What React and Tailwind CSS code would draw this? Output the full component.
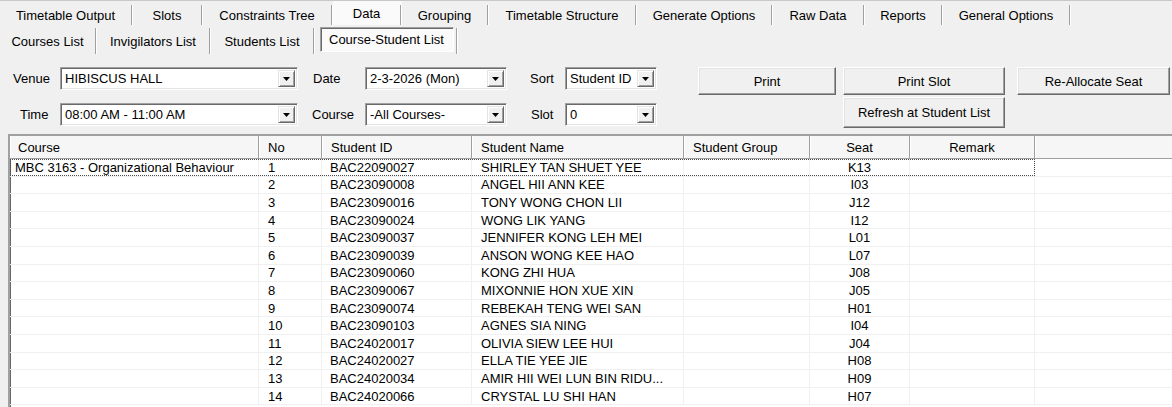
import React from "react";

const mainTabs = [
    { label: "Timetable Output", w: "w-[133px]" },
    { label: "Slots", w: "w-[70px]" },
    { label: "Constraints Tree", w: "w-[130px]" },
    { label: "Data", w: "w-[69px]", active: true },
    { label: "Grouping", w: "w-[87px]" },
    { label: "Timetable Structure", w: "w-[148px]" },
    { label: "Generate Options", w: "w-[136px]" },
    { label: "Raw Data", w: "w-[92px]" },
    { label: "Reports", w: "w-[78px]" },
    { label: "General Options", w: "w-[128px]" },
];

const subTabs = [
    { label: "Courses List", w: "w-[97px]" },
    { label: "Invigilators List", w: "w-[114px]" },
    { label: "Students List", w: "w-[104px]" },
];

const columns = [
    { label: "Course", w: "w-[249px]", head: "pl-[8px]", cell: "pl-[5px]" },
    { label: "No", w: "w-[63px]", head: "pl-[9px]", cell: "pl-[9px]" },
    { label: "Student ID", w: "w-[150px]", head: "pl-[9px]", cell: "pl-[8px]" },
    { label: "Student Name", w: "w-[212px]", head: "pl-[9px]", cell: "pl-[9px]" },
    { label: "Student Group", w: "w-[126px]", head: "pl-[9px]", cell: "pl-[9px]" },
    { label: "Seat", w: "w-[100px]", head: "justify-center", cell: "justify-center" },
    { label: "Remark", w: "w-[125px]", head: "justify-center", cell: "justify-center" },
];

const students = [
    ["BAC22090027", "SHIRLEY TAN SHUET YEE", "K13"],
    ["BAC23090008", "ANGEL HII ANN KEE", "I03"],
    ["BAC23090016", "TONY WONG CHON LII", "J12"],
    ["BAC23090024", "WONG LIK YANG", "I12"],
    ["BAC23090037", "JENNIFER KONG LEH MEI", "L01"],
    ["BAC23090039", "ANSON WONG KEE HAO", "L07"],
    ["BAC23090060", "KONG ZHI HUA", "J08"],
    ["BAC23090067", "MIXONNIE HON XUE XIN", "J05"],
    ["BAC23090074", "REBEKAH TENG WEI SAN", "H01"],
    ["BAC23090103", "AGNES SIA NING", "I04"],
    ["BAC24020017", "OLIVIA SIEW LEE HUI", "J04"],
    ["BAC24020027", "ELLA TIE YEE JIE", "H08"],
    ["BAC24020034", "AMIR HII WEI LUN BIN RIDU...", "H09"],
    ["BAC24020066", "CRYSTAL LU SHI HAN", "H07"],
];

function Separator({ tall }) {
    return (
        <div className={`w-[2px] shrink-0 self-end border-l border-l-[#a0a0a0] border-r border-r-white ${tall ? "h-[26px]" : "h-[20px]"}`} />
    );
}

function Combo({ w, value }) {
    return (
        <div className={`${w} h-[23px] flex items-stretch bg-white border border-t-[#a0a0a0] border-l-[#a0a0a0] border-b-white border-r-white shadow-[inset_1px_1px_0_#696969,inset_-1px_-1px_0_#e3e3e3] p-[2px]`}>
            <div className="flex-1 flex items-center pl-[2px] overflow-hidden whitespace-nowrap">{value}</div>
            <div className="w-[17px] shrink-0 flex items-center justify-center bg-[#f0f0f0] border border-t-[#e3e3e3] border-l-[#e3e3e3] border-b-[#696969] border-r-[#696969] shadow-[inset_1px_1px_0_#fff,inset_-1px_-1px_0_#a0a0a0]">
                <svg width="7" height="4" viewBox="0 0 7 4">
                    <path d="M0 0h7L3.5 4z" fill="#000" />
                </svg>
            </div>
        </div>
    );
}

function Btn({ w, h, children }) {
    return (
        <div className={`${w} ${h} flex items-center justify-center bg-[#f0f0f0] border border-t-white border-l-white border-b-[#696969] border-r-[#696969] shadow-[inset_-1px_-1px_0_#a0a0a0,inset_1px_1px_0_#e3e3e3]`}>
            {children}
        </div>
    );
}

export default function App() {
    return (
        <div className="w-[1172px] h-[407px] overflow-hidden bg-[#f0f0f0] text-[13px] text-black font-['Liberation_Sans',Arial,sans-serif] leading-none flex flex-col">
            {/* main tabs */}
            <div className="h-[25px] flex border-t border-t-[#c8c8c8]">
                {mainTabs.map((t) => (
                    <div key={t.label} className={`${t.w} flex shrink-0 ${t.active ? "bg-[#fafafa]" : ""}`}>
                        <div className={`flex-1 flex justify-center ${t.active ? "items-start pt-[6px]" : "items-center pt-[4px]"}`}>{t.label}</div>
                        <Separator />
                    </div>
                ))}
            </div>

            {/* sub tabs */}
            <div className="h-[29px] flex items-start">
                {subTabs.map((t) => (
                    <div key={t.label} className={`${t.w} h-[29px] flex shrink-0`}>
                        <div className="flex-1 flex items-center justify-center pt-[3px]">{t.label}</div>
                        <Separator tall />
                    </div>
                ))}
                <div className="ml-[5px] mt-[2px] w-[134px] h-[25px] flex items-center pl-[8px] bg-[#fafafa] border border-t-[#a0a0a0] border-l-[#a0a0a0] border-b-white border-r-white shadow-[inset_1px_1px_0_#696969]">
                    Course-Student List
                </div>
                <div className="w-[2px] h-[26px] mt-[3px] ml-[2px] border-l border-l-[#a0a0a0] border-r border-r-white" />
            </div>

            {/* controls */}
            <div className="h-[67px] mt-[13px] flex shrink-0">
                <div className="w-[698px] flex flex-col gap-[13px]">
                    <div className="flex items-center h-[23px]">
                        <div className="w-[60px] pl-[13px]">Venue</div>
                        <Combo w="w-[238px]" value="HIBISCUS HALL" />
                        <div className="w-[67px] pl-[15px]">Date</div>
                        <Combo w="w-[142px]" value="2-3-2026 (Mon)" />
                        <div className="w-[58px] pl-[23px]">Sort</div>
                        <Combo w="w-[92px]" value="Student ID" />
                    </div>
                    <div className="flex items-center h-[23px]">
                        <div className="w-[60px] pl-[20px]">Time</div>
                        <Combo w="w-[238px]" value="08:00 AM - 11:00 AM" />
                        <div className="w-[67px] pl-[14px]">Course</div>
                        <Combo w="w-[142px]" value="-All Courses-" />
                        <div className="w-[58px] pl-[24px]">Slot</div>
                        <Combo w="w-[92px]" value="0" />
                    </div>
                </div>
                <div className="flex flex-col gap-[2px]">
                    <div className="flex">
                        <Btn w="w-[138px]" h="h-[28px]">Print</Btn>
                        <div className="ml-[7px]">
                            <Btn w="w-[162px]" h="h-[28px]">Print Slot</Btn>
                        </div>
                        <div className="ml-[12px]">
                            <Btn w="w-[153px]" h="h-[28px]">Re-Allocate Seat</Btn>
                        </div>
                    </div>
                    <div className="ml-[145px]">
                        <Btn w="w-[162px]" h="h-[31px]">Refresh at Student List</Btn>
                    </div>
                </div>
            </div>

            {/* list view */}
            <div className="ml-[8px] flex-1 bg-white border-2 border-t-[#a0a0a0] border-l-[#a0a0a0] border-r-0 border-b-0 shadow-[inset_1px_1px_0_#696969] overflow-hidden">
                <div className="h-[23px] flex bg-[#f6f6f6] border-b border-b-[#a0a0a0]">
                    {columns.map((c) => (
                        <div key={c.label} className={`${c.w} shrink-0 flex items-center ${c.head} border-r border-r-[#a0a0a0] shadow-[inset_1px_0_0_#fff]`}>
                            {c.label}
                        </div>
                    ))}
                    <div className="flex-1 shadow-[inset_1px_0_0_#fff]" />
                </div>
                {students.map((s, i) => {
                    const values = [i === 0 ? "MBC 3163 - Organizational Behaviour" : "", String(i + 1), s[0], s[1], "", s[2], ""];
                    return (
                        <div key={s[0]} className="h-[17.6px] flex border-b border-b-[#f0f0f0]">
                            <div className={`flex ${i === 0 ? "outline outline-1 outline-dotted outline-[#4a4a4a] -outline-offset-1" : ""}`}>
                                {values.map((v, j) => (
                                    <div key={j} className={`${columns[j].w} shrink-0 flex items-center ${columns[j].cell} border-r border-r-[#f0f0f0] whitespace-nowrap overflow-hidden`}>
                                        {v}
                                    </div>
                                ))}
                            </div>
                            <div className="flex-1" />
                        </div>
                    );
                })}
            </div>
        </div>
    );
}
